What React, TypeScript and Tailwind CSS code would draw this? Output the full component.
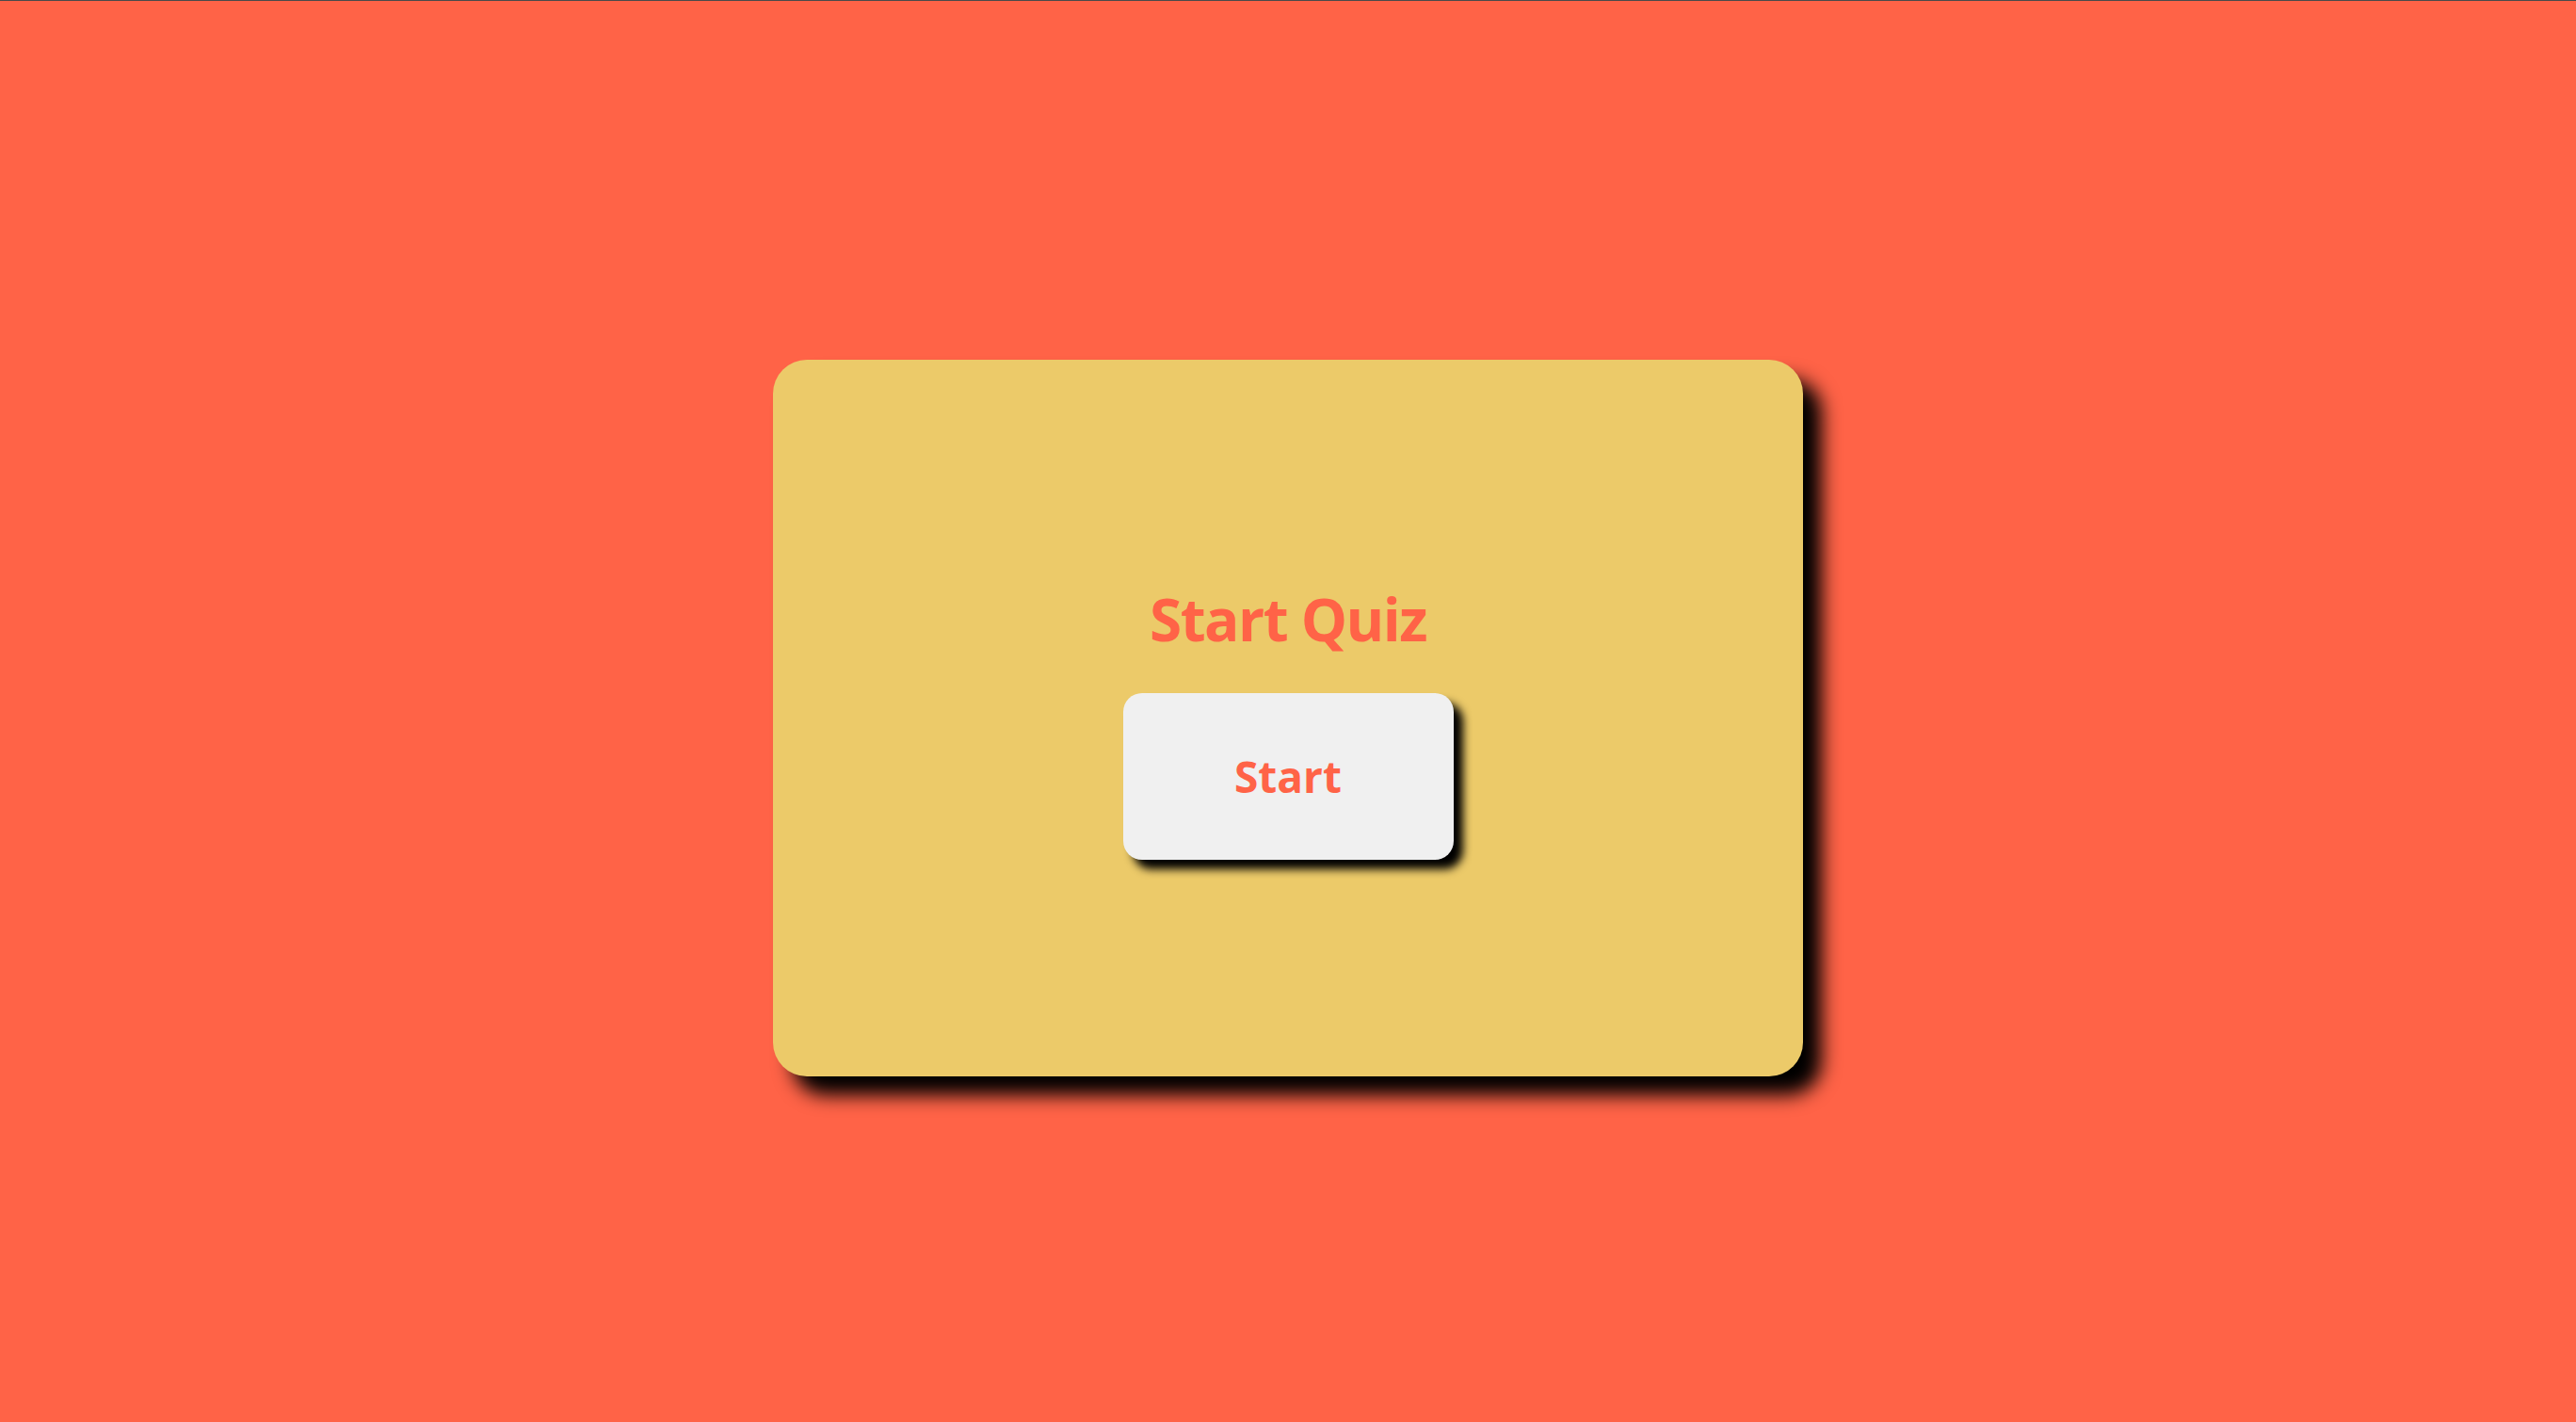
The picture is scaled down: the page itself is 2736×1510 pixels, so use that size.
export default function App() {
  return (
    <div className="min-h-screen w-full bg-[#ff6347] border-t border-[#4a4a4a] flex flex-col items-center pt-[381px]" style={{ fontFamily: '"Open Sans", "Noto Sans", sans-serif' }}>
      <div className="w-[1094px] h-[761px] bg-[#ecca69] rounded-[36px] shadow-[20px_20px_20px_#000] flex flex-col items-center pt-[244px]">
        <h1 className="text-[62px] leading-none font-bold tracking-[-1.5px] text-[#ff6347] mb-[48px]">Start Quiz</h1>
        <button className="w-[351px] h-[177px] bg-[#f0f0f0] rounded-[20px] shadow-[10px_10px_10px_#000] text-[46px] font-bold text-[#ff6347]">
          Start
        </button>
      </div>
    </div>
  )
}
